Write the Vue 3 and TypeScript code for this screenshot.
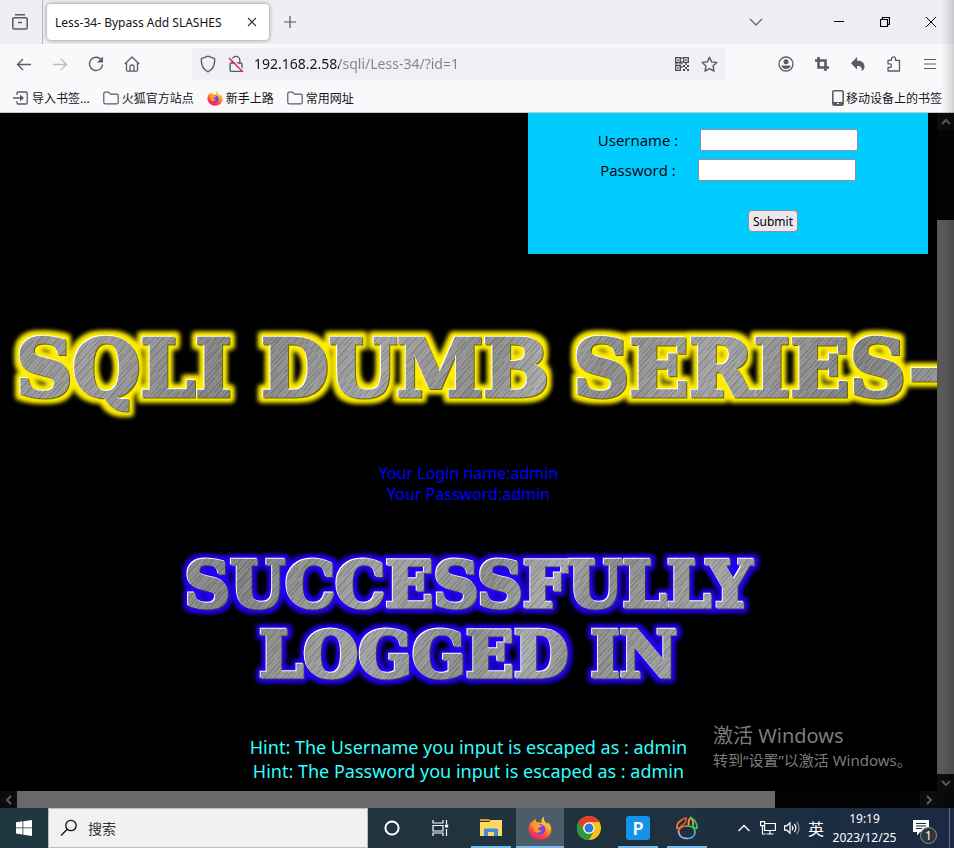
<script setup lang="ts">
import { ref } from 'vue'

const address = ref('192.168.2.58/sqli/Less-34/?id=1')
const username = ref('')
const password = ref('')
const query = ref('')

const bookmarks = [
  { label: '导入书签...', icon: 'import' },
  { label: '火狐官方站点', icon: 'folder' },
  { label: '新手上路', icon: 'firefox' },
  { label: '常用网址', icon: 'folder' },
]

const loginLines = ['Your Login name:admin', 'Your Password:admin']
const hints = [
  'Hint: The Username you input is escaped as : admin',
  'Hint: The Password you input is escaped as : admin',
]
</script>

<template>
  <div class="desktop">
    <svg class="defs" aria-hidden="true">
      <defs>
        <linearGradient id="flame" x1="0.8" y1="0" x2="0.3" y2="1">
          <stop offset="0" stop-color="#fff04a" />
          <stop offset="0.4" stop-color="#ffa52a" />
          <stop offset="0.7" stop-color="#ff4a3c" />
          <stop offset="1" stop-color="#f0178a" />
        </linearGradient>
        <linearGradient id="globe" x1="0" y1="0" x2="1" y2="1">
          <stop offset="0" stop-color="#a63cf0" />
          <stop offset="1" stop-color="#4a4fe0" />
        </linearGradient>
        <symbol id="firefox" viewBox="0 0 24 24">
          <path fill="url(#flame)" d="M16.2.6c-1 2.6-.3 4 1.300 5.600 1.200 1 1.700 1.500 2.200 2.500 0-1.200-.2-2.200-.5-3 2.900 2.300 4.300 5 4.100 8.300-.3 5.700-5.200 9.700-11.200 9.700S.8 19.400.7 13.300C.7 10.300 1.700 7.400 3.300 5c0 1 .1 1.700.5 2.300C4.700 5.200 6 3.900 7.600 3c-.1 1.600.2 2.700 1 3.300 2-.1 3.500 0 5 .8-.5-2.600.4-5.200 2.600-6.500z" />
          <circle cx="12.200" cy="13.300" r="5.200" fill="url(#globe)" />
          <path fill="#ff9a2b" d="M4 8.500c2.200-1.500 5-1.600 7.400-.1 1 .7 2.200.8 3 1-1 1.700-3.500 1.200-4.300 2.800-.3 1.400 1 2.600 3.700 1.800-1.800 3.700-7 3.400-8.200-.2C5 11.600 5 10 4 8.500z" />
        </symbol>
        <symbol id="folder" viewBox="0 0 16 16">
          <path fill="none" stroke="#5b5b66" stroke-width="1.200" d="M.8 3.600c0-.9.600-1.500 1.500-1.500h3.200l2 2h6.200c.9 0 1.500.6 1.500 1.500v6.800c0 .9-.6 1.500-1.500 1.500H2.300c-.9 0-1.500-.6-1.500-1.500z" />
        </symbol>
        <symbol id="import" viewBox="0 0 16 16">
          <path fill="none" stroke="#5b5b66" stroke-width="1.300" d="M4 5V3.200C4 2.400 4.500 2 5.200 2h7.600c.8 0 1.400.5 1.400 1.300v9.400c0 .8-.6 1.300-1.400 1.300H5.200C4.500 14 4 13.600 4 12.800V11M0 8h10" />
          <path fill="#5b5b66" d="M7 4.500L11 8l-4 3.500z" />
        </symbol>
      </defs>
    </svg>

    <header class="tabs">
      <button class="archive" aria-label="Firefox View">
        <svg width="16" height="16" viewBox="0 0 16 16"><path fill="none" stroke="#5b5b66" stroke-width="1.500" d="M3 .8h10M2 3.800h12c.8 0 1.200.5 1.200 1.200v8.400c0 .9-.6 1.600-1.500 1.600H2.300c-.9 0-1.500-.7-1.500-1.600V5C.8 4.300 1.200 3.800 2 3.800zM6 8.500h4" /></svg>
      </button>
      <div class="tab">
        <span class="tab-title">Less-34- Bypass Add SLASHES</span>
        <button class="tab-close" aria-label="Close tab">
          <svg width="10" height="10" viewBox="0 0 10 10"><path stroke="#35353c" stroke-width="1.200" d="M1 1l8 8M9 1L1 9" /></svg>
        </button>
      </div>
      <button class="new-tab" aria-label="New tab">
        <svg width="12" height="12" viewBox="0 0 12 12"><path stroke="#55555f" stroke-width="1.200" d="M6 0v12M0 6h12" /></svg>
      </button>
      <button class="list-tabs" aria-label="List tabs">
        <svg width="14" height="8" viewBox="0 0 14 8"><path fill="none" stroke="#6b6b75" stroke-width="1.400" d="M1 1l6 6 6-6" /></svg>
      </button>
      <div class="window-buttons">
        <button aria-label="Minimize">
          <svg width="10" height="10" viewBox="0 0 10 10"><path stroke="#000" d="M0 4.500h10" /></svg>
        </button>
        <button aria-label="Restore">
          <svg width="10" height="10" viewBox="0 0 10 10"><path fill="none" stroke="#000" stroke-width="1.200" d="M.5 2.500h7v7h-7zM2.500 2.500v-2h7v7h-2" /></svg>
        </button>
        <button aria-label="Close">
          <svg width="10" height="10" viewBox="0 0 10 10"><path stroke="#000" d="M0 0l10 10M10 0L0 10" /></svg>
        </button>
      </div>
    </header>

    <nav class="toolbar">
      <button class="tool" aria-label="Back">
        <svg width="16" height="16" viewBox="0 0 16 16"><path fill="none" stroke="#5b5b66" stroke-width="1.400" d="M15 8.500H1.500M7 3L1.500 8.500 7 14" /></svg>
      </button>
      <button class="tool" aria-label="Forward">
        <svg width="16" height="16" viewBox="0 0 16 16"><path fill="none" stroke="#bdbdc3" stroke-width="1.400" d="M1 8.500h13.500M9 3l5.500 5.500L9 14" /></svg>
      </button>
      <button class="tool" aria-label="Reload">
        <svg width="16" height="16" viewBox="0 0 16 16"><path fill="none" stroke="#5b5b66" stroke-width="1.400" d="M13 3.500A6.600 6.600 0 1 0 14.600 8.600" /><path fill="#5b5b66" d="M15 .5v6H9z" /></svg>
      </button>
      <button class="tool" aria-label="Home">
        <svg width="16" height="16" viewBox="0 0 16 16"><path fill="none" stroke="#5b5b66" stroke-width="1.300" stroke-linejoin="round" d="M.8 8L8 1l7.200 7M2.500 6.600v7.200c0 .8.4 1.300 1.200 1.300h8.600c.8 0 1.200-.5 1.200-1.300V6.600M6 15v-4.500C6 9.600 6.800 9 8 9s2 .6 2 1.500V15" /></svg>
      </button>
      <div class="url">
        <svg width="16" height="18" viewBox="0 0 16 18"><path fill="none" stroke="#5b5b66" stroke-width="1.400" stroke-linejoin="round" d="M8 1.200l6.600 2.500c.5 6-1.600 10.600-6.600 13.100C3 14.300.9 9.700 1.400 3.700z" /></svg>
        <svg class="lock" width="16" height="18" viewBox="0 0 16 18"><path fill="none" stroke="#5b5b66" stroke-width="1.400" d="M4.200 8V5.200a3.800 3.800 0 0 1 7.600 0V8M3.200 8h9.600c.7 0 1.100.5 1.100 1.100v5.800c0 .9-.6 1.500-1.500 1.500H3.600c-.9 0-1.500-.6-1.500-1.500V9.100C2.100 8.500 2.500 8 3.200 8z" /><path stroke="#f0f0f4" stroke-width="1.500" d="M2.500 2.500l13 13" /><path stroke="#e22850" stroke-width="1.500" d="M1 3l14 14" /></svg>
        <input v-model="address" class="url-input" type="text" aria-label="Address" />
        <svg class="qr" width="14" height="14" viewBox="0 0 14 14"><path fill="none" stroke="#4d4d57" stroke-width="1.300" d="M.7.7h4.600v4.600H.7zM8.700.7h4.600v4.600H8.700zM.7 8.700h4.600v4.600H.7z" /><path fill="#4d4d57" d="M2.300 2.300h1.500v1.500H2.300zM10.300 2.300h1.500v1.500h-1.500zM2.300 10.300h1.500v1.500H2.300zM6.300 0h1.300v2H6.300zM6.300 4h1.300v3.200H6.300zM0 6.300h3v1.300H0zM4 6.300h2v1.300H4zM8 8h2v2H8zM10 10h2v2h-2zM12 8h2v2h-2zM8 12h2v2H8zM12 12h2v2h-2zM6.300 9h1.300v2H6.300zM10 6.300h2v1.500h-2z" /></svg>
        <svg width="17" height="17" viewBox="0 0 17 17"><path fill="none" stroke="#5b5b66" stroke-width="1.400" stroke-linejoin="round" d="M8.500 1.200l2.100 4.700 5.200.6-3.800 3.500 1 5.200-4.500-2.600L4 15.200l1-5.200-3.800-3.500 5.200-.6z" /></svg>
      </div>
      <button class="tool" aria-label="Account">
        <svg width="16" height="16" viewBox="0 0 16 16"><circle cx="8" cy="8" r="7" fill="none" stroke="#5b5b66" stroke-width="1.300" /><circle cx="8" cy="5.800" r="2.500" fill="#5b5b66" /><path fill="#5b5b66" d="M3.500 9.500h9c0 2-2 3.500-4.500 3.500s-4.500-1.500-4.500-3.500z" /></svg>
      </button>
      <button class="tool" aria-label="Screenshot">
        <svg width="16" height="16" viewBox="0 0 16 16"><path fill="none" stroke="#5b5b66" stroke-width="2.600" d="M4.500 1v10.500H15M1 4.500h10.500V15" /></svg>
      </button>
      <button class="tool" aria-label="Undo">
        <svg width="16" height="16" viewBox="0 0 16 16"><path fill="#5b5b66" d="M7 1v3.500c5 .2 7.500 2.500 7.500 6 0 2-1 3.500-2.800 4.500.6-3.300-.7-5-4.700-5v3.500L1 7.300z" /></svg>
      </button>
      <button class="tool" aria-label="Extensions">
        <svg width="16" height="16" viewBox="0 0 16 16"><path fill="none" stroke="#5b5b66" stroke-width="1.300" stroke-linejoin="round" d="M2 4.300h3.500V2.800a2 2 0 0 1 4 0v1.500h4V15H2v-3.500h1.700a1.700 1.700 0 0 0 0-3.600H2z" /></svg>
      </button>
      <button class="tool" aria-label="Menu">
        <svg width="14" height="12" viewBox="0 0 14 12"><path stroke="#5b5b66" stroke-width="1.200" d="M1 1.500h12M1 6h12M1 10.500h12" /></svg>
      </button>
    </nav>

    <div class="bookmarks">
      <a v-for="mark in bookmarks" :key="mark.label" href="#" class="bookmark">
        <svg width="16" height="16"><use :href="'#' + mark.icon" /></svg>{{ mark.label }}
      </a>
      <a href="#" class="bookmark mobile">
        <svg width="12" height="16" viewBox="0 0 12 16"><rect x="0.800" y="0.800" width="10.400" height="14.400" rx="1.500" fill="none" stroke="#5b5b66" stroke-width="1.600" /><path stroke="#5b5b66" stroke-width="3" d="M1 13.500h10" /><path stroke="#f9f9fb" d="M5 13.500h2" /></svg>移动设备上的书签
      </a>
    </div>

    <div class="viewport">
      <main class="page">
        <form class="login" @submit.prevent>
          <div class="field">
            <label for="uname">Username :</label>
            <input id="uname" v-model="username" type="text" />
          </div>
          <div class="field">
            <label for="passwd">Password :</label>
            <input id="passwd" v-model="password" type="password" />
          </div>
          <button class="submit" type="submit">Submit</button>
        </form>

        <svg class="banner title" role="img" aria-label="SQLI DUMB SERIES-">
          <defs>
            <linearGradient id="steel" gradientUnits="userSpaceOnUse" x1="0" y1="0" x2="500" y2="180" spreadMethod="reflect">
              <stop offset="0" stop-color="#8f8f8f" />
              <stop offset="0.200" stop-color="#9b9b9b" />
              <stop offset="0.450" stop-color="#808080" />
              <stop offset="0.700" stop-color="#a2a2a2" />
              <stop offset="0.900" stop-color="#898989" />
              <stop offset="1" stop-color="#aaaaaa" />
            </linearGradient>
            <pattern id="hatch" width="13" height="60" patternUnits="userSpaceOnUse" patternTransform="rotate(42)">
              <path stroke="#fff" stroke-opacity="0.250" stroke-width="0.700" d="M1 0v42M4 20v40M7.500 0v60M11 8v30" />
              <path stroke="#000" stroke-opacity="0.250" stroke-width="0.700" d="M2.500 10v50M6 0v36M9.500 26v34M12.300 0v22" />
            </pattern>
            <pattern id="metal" width="1400" height="200" patternUnits="userSpaceOnUse">
              <rect width="1400" height="200" fill="url(#steel)" />
              <rect width="1400" height="200" fill="url(#hatch)" />
            </pattern>
            <filter id="yellow-glow" filterUnits="userSpaceOnUse" x="0" y="0" width="1400" height="130" color-interpolation-filters="sRGB">
              <feMorphology in="SourceAlpha" operator="dilate" radius="4" result="fat" />
              <feGaussianBlur in="fat" stdDeviation="2.500" result="soft" />
              <feFlood flood-color="#ffee00" />
              <feComposite in2="soft" operator="in" result="glow" />
              <feOffset in="SourceAlpha" dx="-1" dy="-1" result="up" />
              <feFlood flood-color="#ffffff" />
              <feComposite in2="up" operator="in" result="light" />
              <feOffset in="SourceAlpha" dx="1" dy="1" result="down" />
              <feFlood flood-color="#6b6410" />
              <feComposite in2="down" operator="in" result="dark" />
              <feMerge><feMergeNode in="glow" /><feMergeNode in="glow" /><feMergeNode in="dark" /><feMergeNode in="light" /><feMergeNode in="SourceGraphic" /></feMerge>
            </filter>
            <filter id="blue-glow" filterUnits="userSpaceOnUse" x="0" y="0" width="1400" height="170" color-interpolation-filters="sRGB">
              <feMorphology in="SourceAlpha" operator="dilate" radius="3" result="fat" />
              <feGaussianBlur in="fat" stdDeviation="2.500" result="soft" />
              <feFlood flood-color="#2200ff" />
              <feComposite in2="soft" operator="in" result="glow" />
              <feOffset in="SourceAlpha" dx="-1" dy="-1" result="up" />
              <feFlood flood-color="#ffffff" />
              <feComposite in2="up" operator="in" result="light" />
              <feOffset in="SourceAlpha" dx="1" dy="1" result="down" />
              <feFlood flood-color="#33335c" />
              <feComposite in2="down" operator="in" result="dark" />
              <feMerge><feMergeNode in="glow" /><feMergeNode in="glow" /><feMergeNode in="dark" /><feMergeNode in="light" /><feMergeNode in="SourceGraphic" /></feMerge>
            </filter>
          </defs>
          <g filter="url(#yellow-glow)">
            <text x="16" y="85">SQLI</text>
            <text x="261" y="85">DUMB</text>
            <text x="573" y="85">SERIES-</text>
          </g>
        </svg>

        <p class="account">
          <span v-for="line in loginLines" :key="line">{{ line }}</span>
        </p>

        <svg class="banner success" role="img" aria-label="SUCCESSFULLY LOGGED IN">
          <g filter="url(#blue-glow)" text-anchor="middle">
            <text x="50%" y="66">SUCCESSFULLY</text>
            <text x="50%" y="136">LOGGED IN</text>
          </g>
        </svg>

        <p class="hints">
          <span v-for="hint in hints" :key="hint">{{ hint }}</span>
        </p>
      </main>

      <div class="vscroll">
        <button class="arrow" aria-label="Scroll up"><svg width="10" height="6" viewBox="0 0 10 6"><path d="M1 5l4-4 4 4" /></svg></button>
        <div class="vthumb"></div>
        <button class="arrow" aria-label="Scroll down"><svg width="10" height="6" viewBox="0 0 10 6"><path d="M1 1l4 4 4-4" /></svg></button>
      </div>
      <div class="hscroll">
        <button class="arrow" aria-label="Scroll left"><svg width="6" height="10" viewBox="0 0 6 10"><path d="M5 1L1 5l4 4" /></svg></button>
        <div class="hthumb"></div>
        <button class="arrow" aria-label="Scroll right"><svg width="6" height="10" viewBox="0 0 6 10"><path d="M1 1l4 4-4 4" /></svg></button>
      </div>
      <div class="corner"></div>

      <aside class="activate">
        <strong>激活 Windows</strong>
        <span>转到“设置”以激活 Windows。</span>
      </aside>
    </div>

    <footer class="taskbar">
      <button class="task" aria-label="Start">
        <svg width="16" height="16" viewBox="0 0 16 16"><path fill="#fff" d="M0 2.200l6.500-.9v6.200H0zM7.300 1.200L16 0v7.500H7.300zM0 8.300h6.500v6.200L0 13.600zM7.300 8.300H16V16l-8.700-1.200z" /></svg>
      </button>
      <label class="search">
        <svg width="18" height="18" viewBox="0 0 18 18"><circle cx="11" cy="6.500" r="5.200" fill="none" stroke="#111" stroke-width="1.300" /><path stroke="#111" stroke-width="1.300" d="M7.300 10.200L1 16.500" /></svg>
        <input v-model="query" type="text" placeholder="搜索" aria-label="搜索" />
      </label>
      <div class="system">
        <button class="task" aria-label="Cortana">
          <svg width="16" height="16" viewBox="0 0 16 16"><circle cx="8" cy="8" r="6.600" fill="none" stroke="#fff" stroke-width="2" /></svg>
        </button>
        <button class="task" aria-label="Task view">
          <svg width="17" height="16" viewBox="0 0 17 16"><path fill="none" stroke="#fff" stroke-width="1.200" d="M1 0v3h10V0M1 5.500h10v5.500H1zM1 16v-3h10v3M14.500 0v4M14.500 9v7" /><path fill="#fff" d="M13 4.500h3.200v3H13z" /></svg>
        </button>
      </div>
      <div class="apps">
        <button class="task running" aria-label="File Explorer">
          <svg width="22" height="20" viewBox="0 0 22 20"><path fill="#e59a0c" d="M0 1h9l2 2H0z" /><path fill="#ffd766" d="M0 4h9l2-2h11v16H0z" /><path fill="#3b8ed8" d="M4 18v-6c0-1 .5-1.500 1.500-1.500h11c1 0 1.500.5 1.500 1.500v6h-4v-4H8v4z" /></svg>
        </button>
        <button class="task running active" aria-label="Firefox">
          <svg width="24" height="24"><use href="#firefox" /></svg>
        </button>
        <button class="task" aria-label="Chrome">
          <svg width="24" height="24" viewBox="0 0 24 24"><circle cx="12" cy="12" r="12" fill="#fbc116" /><path fill="#e33b2e" d="M1.600 6A12 12 0 0 1 22.400 6H12a6 6 0 0 0-5.200 9z" /><path fill="#249a41" d="M1.600 6A12 12 0 0 0 12 24l5.200-9a6 6 0 0 1-10.400 0z" /><circle cx="12" cy="12" r="5.600" fill="#fff" /><circle cx="12" cy="12" r="4.500" fill="#2f78e8" /></svg>
        </button>
        <button class="task running" aria-label="P">
          <span class="p-tile">P</span>
        </button>
        <button class="task running" aria-label="Navicat">
          <svg width="24" height="24" viewBox="0 0 24 24"><g fill="none" stroke-width="1.700" stroke-linecap="round" stroke-linejoin="round"><path stroke="#f0502e" d="M6 4.500C8 2.500 9.500 2 11 1.800c.3 3.200-.5 5.200-2.500 6.700" /><path stroke="#f0742e" d="M6 4.500C3 6.500 1.500 9.500 2 12.500c2.500 0 4-1.200 5-3" /><path stroke="#f5a52c" d="M13.500 9c-.3-3 .3-5.500 2.200-7.500 2 2 2.800 4 2.500 7" /><path stroke="#3fbf6c" d="M15.700 1.500c4 2 6.500 6 6.300 11-2.500 0-3.800-1.500-4.500-4" /><path stroke="#ef6a2e" d="M3.500 15.500c1-4.500 4.500-5.500 8.500-5.500" /><path stroke="#58c06c" d="M12 10c4.500 0 8 1.500 8 6" /><path stroke="#4aa9e8" d="M20 16c0 4-3.500 6.500-8 6.500" /><path stroke="#a5b4f0" d="M12 22.500c-5 0-8-2.500-8.500-7" /></g></svg>
        </button>
      </div>
      <div class="tray">
        <button aria-label="Show hidden icons"><svg width="12" height="8" viewBox="0 0 12 8"><path fill="none" stroke="#fff" stroke-width="1.300" d="M.5 7L6 1.500 11.500 7" /></svg></button>
        <button aria-label="Network"><svg width="16" height="14" viewBox="0 0 16 14"><path fill="none" stroke="#fff" stroke-width="1.200" d="M5 2.500h10.400v7H4.600V5M10 9.500V13M6.500 13h7M.6.6h4v4h-4zM2.500 4.500V13h3" /></svg></button>
        <button aria-label="Volume"><svg width="17" height="14" viewBox="0 0 17 14"><path fill="none" stroke="#fff" stroke-width="1.200" d="M.6 4.800h2.200L6 1.800v10.400L2.800 9.200H.6zM8 4.800c1 1.200 1 3.200 0 4.400M10.300 3c2 2.200 2 5.800 0 8" /><path fill="none" stroke="#8c969e" stroke-width="1.200" d="M12.800 1c3 3.500 3 8.500 0 12" /></svg></button>
        <button class="ime">英</button>
        <time class="clock"><span>19:19</span><span>2023/12/25</span></time>
        <button class="notice" aria-label="Notifications">
          <svg width="16" height="16" viewBox="0 0 16 16"><path fill="#fff" d="M0 0h16v12H7l-3 3.500V12H0z" /><path stroke="#1b2b40" stroke-width="1.200" d="M3 3.500h10M3 6h10M3 8.500h6" /></svg>
          <span class="badge">1</span>
        </button>
      </div>
    </footer>
    <div class="edge"></div>
  </div>
</template>

<style>
body {
  margin: 0;
  background: #000;
}
</style>

<style scoped>
.desktop {
  position: relative;
  display: flex;
  flex-direction: column;
  min-height: 100vh;
  overflow: hidden;
  font-family: "Noto Sans", "Noto Sans CJK SC", sans-serif;
  font-size: 12px;
  color: #15141a;
}
.defs {
  position: absolute;
  width: 0;
  height: 0;
}
button {
  display: flex;
  align-items: center;
  justify-content: center;
  padding: 0;
  border: 0;
  background: none;
  font: inherit;
  color: inherit;
}
svg {
  flex: none;
}

.tabs {
  display: flex;
  height: 44px;
  background: #efeef3;
}
.archive {
  width: 43px;
  padding-right: 3px;
  border-right: 1px solid #b5b5bb;
}
.tab {
  display: flex;
  align-items: center;
  justify-content: space-between;
  box-sizing: border-box;
  width: 222px;
  height: 36px;
  margin: 4px;
  padding: 0 8px;
  border-radius: 4px;
  background: #fff;
  box-shadow: 0 0 4px rgba(0, 0, 0, 0.450);
}
.tab-title {
  white-space: nowrap;
}
.tab-close {
  width: 18px;
  height: 18px;
}
.new-tab {
  width: 34px;
}
.list-tabs {
  width: 36px;
  margin-left: auto;
}
.window-buttons {
  display: flex;
  margin-left: 42px;
}
.window-buttons button {
  width: 46px;
}

.toolbar {
  display: flex;
  align-items: center;
  height: 40px;
  padding: 0 6px;
  background: #f9f9fb;
}
.tool {
  width: 36px;
  height: 32px;
}
.url {
  display: flex;
  flex: 1;
  align-items: center;
  box-sizing: border-box;
  height: 32px;
  margin: 0 42px;
  padding: 0 8px;
  border-radius: 4px;
  background: #f0f0f4;
}
.lock {
  margin: 0 10px 0 12px;
}
.url-input {
  flex: 1;
  min-width: 0;
  padding: 0;
  border: 0;
  outline: 0;
  background: linear-gradient(to right, #15141a 85px, #808087 85px);
  background-clip: text;
  color: transparent;
  font: 14px/30px "Noto Sans", sans-serif;
}
.qr {
  margin-right: 12px;
}

.bookmarks {
  display: flex;
  align-items: center;
  gap: 13px;
  height: 28px;
  padding: 0 12px 0 13px;
  border-bottom: 1px solid #c6c6ca;
  background: #f9f9fb;
}
.bookmark {
  display: flex;
  align-items: center;
  gap: 3px;
  color: inherit;
  text-decoration: none;
  white-space: nowrap;
}
.mobile {
  gap: 2px;
  margin-left: auto;
}

.viewport {
  position: relative;
  display: grid;
  flex: 1;
  grid-template-columns: minmax(0, 1fr) 17px;
  grid-template-rows: 1fr 17px;
  background: #000;
}
.page {
  display: flex;
  flex-direction: column;
  overflow: hidden;
}
.login {
  display: flex;
  flex-direction: column;
  align-items: center;
  align-self: flex-end;
  gap: 8px;
  box-sizing: border-box;
  width: 400px;
  margin-right: 9px;
  padding: 16px 0 22px;
  background: #00ccff;
  color: #000;
}
.field {
  display: flex;
  align-items: center;
  gap: 22px;
  font-family: "Open Sans", sans-serif;
  font-size: 15px;
  line-height: 20px;
}
.field input {
  box-sizing: border-box;
  width: 158px;
  height: 22px;
  border: 1px solid #8f8f9d;
  border-radius: 2px;
  background: #fff;
}
.submit {
  height: 22px;
  margin: 21px 0 0 90px;
  padding: 0 4px;
  border: 1px solid #8f8f9d;
  border-radius: 4px;
  background: #e9e9ed;
  font-size: 12px;
}
.banner {
  display: block;
  width: 100%;
  font-family: "DejaVu Serif", serif;
  font-weight: bold;
  fill: url(#metal);
  stroke: url(#metal);
  stroke-width: 3;
}
.title {
  height: 130px;
  margin-top: 57px;
  font-size: 78px;
}
.account,
.hints {
  display: flex;
  flex-direction: column;
  align-items: center;
  margin: 0;
}
.account {
  margin-top: 22px;
  font-size: 16px;
  line-height: 21px;
  color: #0000ff;
}
.success {
  height: 170px;
  margin-top: 36px;
  font-size: 63px;
}
.hints {
  margin-top: 24px;
  padding-bottom: 8px;
  font-size: 18px;
  line-height: 24px;
  color: #33ffff;
}

.vscroll,
.hscroll {
  display: flex;
  background: #040406;
}
.vscroll {
  flex-direction: column;
}
.arrow {
  flex: none;
  width: 17px;
  height: 17px;
  background: #0c0c0e;
}
.arrow path {
  fill: none;
  stroke: #5c5c5c;
  stroke-width: 2;
}
.vthumb {
  flex: 1;
  margin-top: 90px;
  background: #595959;
}
.hthumb {
  flex: 1;
  margin-right: 145px;
  background: #696969;
}
.corner {
  background: #0a0a0c;
}
.activate {
  position: absolute;
  right: 38px;
  bottom: 38px;
  display: flex;
  flex-direction: column;
  width: 203px;
  color: #7c7c7c;
  font-size: 15px;
  line-height: 20px;
  white-space: nowrap;
}
.activate strong {
  font-size: 20px;
  font-weight: normal;
  line-height: 28px;
}

.taskbar {
  display: flex;
  height: 40px;
  background: linear-gradient(to right, #21373f, #20323e 60%, #1b2a42);
  color: #fff;
}
.task {
  position: relative;
  width: 48px;
  height: 40px;
}
.running::after {
  content: "";
  position: absolute;
  right: 4px;
  bottom: 0;
  left: 4px;
  height: 2px;
  background: #76b9ed;
}
.active {
  background: #4c5d67;
}
.active::after {
  right: 0;
  left: 0;
}
.search {
  display: flex;
  align-items: center;
  gap: 8px;
  box-sizing: border-box;
  width: 320px;
  padding: 0 11px;
  border: 1px solid #bdbdbd;
  background: #f1f1f1;
}
.search input {
  flex: 1;
  min-width: 0;
  border: 0;
  outline: 0;
  background: none;
  font: 14px "Noto Sans CJK SC", sans-serif;
}
.search input::placeholder {
  color: #333;
}
.system {
  display: flex;
}
.apps {
  display: flex;
  gap: 1px;
  margin-left: 3px;
}
.p-tile {
  width: 24px;
  border-radius: 3px;
  background: #1593e6;
  font-size: 18px;
  font-weight: 600;
  line-height: 24px;
}
.tray {
  display: flex;
  align-items: center;
  margin-left: auto;
  margin-right: 4px;
  border-right: 1px solid #66717d;
}
.tray button {
  width: 24px;
  height: 40px;
}
.tray .ime {
  font-size: 16px;
}
.clock {
  display: flex;
  flex-direction: column;
  align-items: center;
  width: 73px;
  font-size: 12px;
  line-height: 19px;
}
.tray .notice {
  position: relative;
  width: 48px;
  padding-right: 8px;
}
.badge {
  position: absolute;
  right: 12px;
  bottom: 4px;
  width: 15px;
  border: 1px solid #8b939b;
  border-radius: 50%;
  background: #30353b;
  font-size: 12px;
  line-height: 15px;
}
.edge {
  position: absolute;
  top: 0;
  right: 0;
  bottom: 40px;
  width: 12px;
  background: linear-gradient(to right, transparent, rgba(0, 0, 0, 0.160));
  pointer-events: none;
}
</style>
